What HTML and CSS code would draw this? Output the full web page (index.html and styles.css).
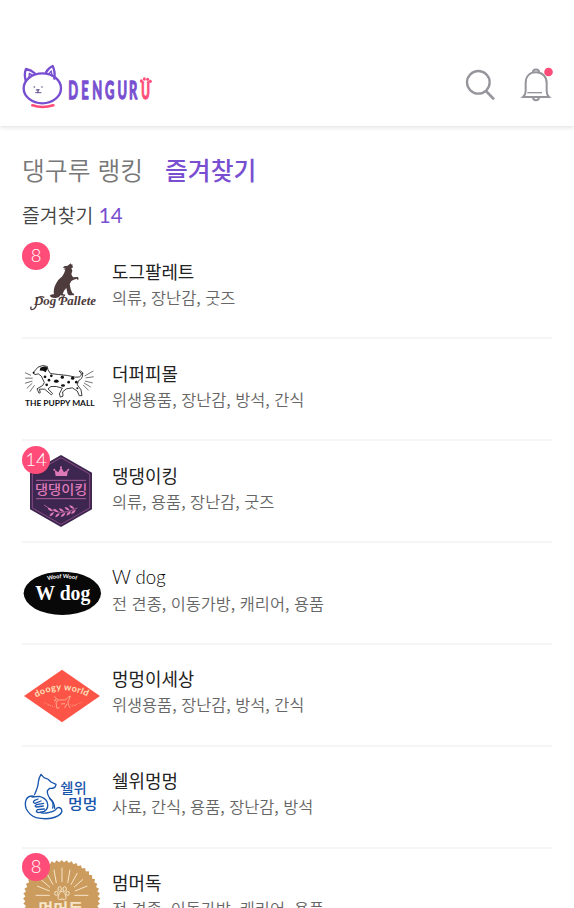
FILE: index.html
```html
<!DOCTYPE html>
<html lang="ko">
<head>
<meta charset="utf-8">
<title>DENGURU</title>
<link rel="stylesheet" href="styles.css">
</head>
<body>
<header class="header">
  <svg class="brand" viewBox="0 0 480 195" fill="none" stroke-linecap="round" stroke-linejoin="round">
    <g stroke="#784fd0" stroke-width="7">
      <ellipse cx="97" cy="100" rx="56" ry="45"/>
      <path d="M47 76C43 62 44 51 48 42C59 44 68 49 77 57M108 52C113 43 119 37 128 33C134 45 135 57 133 71"/>
      <path d="M57 67L58 55L68 61M116 57L124 48L126 63" stroke-width="4"/>
    </g>
    <path d="M80 104L88 104L84 108ZM84 108V113M77 113H93" stroke="#66518f" stroke-width="3"/>
    <circle cx="73" cy="96" r="2.5" fill="#66518f"/><circle cx="96" cy="96" r="2.5" fill="#66518f"/>
    <path d="M67 151Q98 161 130 151" stroke="#ff4c78" stroke-width="8"/>
    <g class="wordmark" transform="scale(.53 1)">
      <text fill="#784fd0" stroke="#784fd0" stroke-width="4" y="133" x="330 403 466 538 608 674">DENGUR</text>
      <text fill="#ff4c78" stroke="#ff4c78" stroke-width="4" x="743" y="133" class="u">U</text>
    </g>
    <g fill="#ff4c78"><ellipse cx="394" cy="78" rx="4.500" ry="5"/><ellipse cx="403" cy="72" rx="4.500" ry="5"/><ellipse cx="413" cy="73" rx="4.500" ry="5"/><ellipse cx="421" cy="79" rx="4.500" ry="5"/></g>
  </svg>
  <svg class="actions" viewBox="0 0 372 240" fill="none" stroke="#96959c" stroke-width="7">
    <circle cx="85" cy="82" r="34"/>
    <path d="M108 108L132 133" stroke-width="8"/>
    <g stroke-width="6">
      <path d="M219 126H297C291 120 290 115 290 108V84C290 64 277 52 258 52S227 64 227 84V108C227 115 225 120 219 126Z"/>
      <path d="M249 52C249 41 267 41 267 52M249 128C250 138 266 138 267 128"/>
      <path d="M232 113H276" stroke-width="4"/>
    </g>
    <circle cx="295.500" cy="51" r="13" fill="#ff4c78" stroke="none"/>
  </svg>
</header>
<main class="content">
  <nav class="tabs"><a class="tab">댕구루 랭킹</a><a class="tab active">즐겨찾기</a></nav>
  <p class="count">즐겨찾기 <b>14</b></p>
  <ul class="list">
    <li class="row">
      <div class="logo"><svg viewBox="0 0 80 80"><g transform="translate(-12 -12.700) scale(.33333)">
        <path fill="#4e3b3c" d="M159 97L162 93L173 91L182 84L184 88L187 85L187 91L190 96L184 98L187 106L184 117L189 126L204 125L206 131L203 135L201 130L191 133L184 137L179 146L182 162L187 173L193 176L191 180L177 180L173 176L169 158L162 166L158 176L166 178L165 182L151 180Q147 188 136 188Q124 189 119 181Q123 175 132 177Q129 163 137 147Q144 132 157 123Q163 114 166 103L160 101L168 98Z"/>
        <text class="script" x="72" y="209" textLength="186" lengthAdjust="spacingAndGlyphs">Dog Pallete</text>
        <path d="M78 191Q88 180 103 186M80 207Q76 222 65 223Q60 221 64 214M148 196Q144 187 163 184" fill="none" stroke="#4e3b3c" stroke-width="4"/>
      </g></svg><span class="badge">8</span></div>
      <div class="info"><h2>도그팔레트</h2><p>의류, 장난감, 굿즈</p></div>
    </li>
    <li class="row">
      <div class="logo"><svg viewBox="0 0 80 80"><g transform="translate(-12 .500) scale(.33333)">
        <g fill="none" stroke="#171717" stroke-width="2.500" stroke-linejoin="round" stroke-linecap="round">
          <path d="M70 69L84 53L98 48L112 51L114 61L121 72L145 75L173 78L196 83Q211 85 214 77Q216 70 207 65Q216 62 218 74Q218 88 205 94L202 106L213 121L216 138L208 139L202 125L187 115L169 118L158 127L159 140L151 143L148 133L157 116L139 111L123 111L114 118L128 132L124 136L104 119L88 119L91 129L87 131L81 118L98 108L103 99L94 80L85 73L76 75Z"/>
          <path d="M46 70L62 77M47 86L67 86M46 101L66 95M51 116L66 102M60 126L73 108M249 65L225 79M250 82L228 85M226 95L247 100M223 101L241 112M220 107L235 122" stroke-width="1.800"/>
        </g>
        <g fill="#111"><path d="M91 55Q107 46 113 56L107 68L99 64L89 63Z"/><circle cx="71" cy="70" r="3"/><ellipse cx="139" cy="95" rx="7" ry="5"/><circle cx="124" cy="79" r="4"/><circle cx="117" cy="92" r="4"/><circle cx="105" cy="82" r="4"/><circle cx="157" cy="83" r="5"/><ellipse cx="159" cy="108" rx="6" ry="4"/><circle cx="176" cy="98" r="4"/><circle cx="188" cy="86" r="5"/><circle cx="199" cy="98" r="4"/><circle cx="110" cy="106" r="4"/><circle cx="202" cy="116" r="3"/><circle cx="218" cy="71" r="2"/></g>
        <text class="puppy" x="45" y="170" textLength="209" lengthAdjust="spacingAndGlyphs">THE PUPPY MALL</text>
      </g></svg></div>
      <div class="info"><h2>더퍼피몰</h2><p>위생용품, 장난감, 방석, 간식</p></div>
    </li>
    <li class="row">
      <div class="logo"><svg viewBox="0 0 80 80"><g transform="translate(-12 -11) scale(.33333)">
        <path fill="#3d2650" d="M153 45L246 98V208L153 261L60 208V98Z"/>
        <path d="M153 53L239 102V204L153 253L67 204V102Z" fill="none" stroke="#ae5d99" stroke-width="2"/>
        <path d="M78 121H228M78 176H228" stroke="#c56ca9" stroke-width="2.500"/>
        <g fill="#df7ab8"><path d="M134 90L145 97L153 82L162 97L174 89L171 108H137Z"/><circle cx="133" cy="89" r="3"/><circle cx="153" cy="82" r="3"/><circle cx="175" cy="89" r="3"/></g>
        <text class="king" x="75" y="162" textLength="157" lengthAdjust="spacingAndGlyphs">댕댕이킹</text>
        <path d="M102 195Q150 235 202 204" fill="none" stroke="#df7ab8" stroke-width="2"/>
        <g fill="#df7ab8"><path id="leaf" d="M128 214Q114 212 113 203Q124 203 128 214M132 216Q118 220 119 229Q130 227 132 216"/><use href="#leaf" x="17" y="3"/><use href="#leaf" x="34" y="2"/><use href="#leaf" x="51" y="-2"/><use href="#leaf" x="65" y="-7"/></g>
      </g></svg><span class="badge">14</span></div>
      <div class="info"><h2>댕댕이킹</h2><p>의류, 용품, 장난감, 굿즈</p></div>
    </li>
    <li class="row">
      <div class="logo"><svg viewBox="0 0 80 80"><g transform="translate(-12 7) scale(.33333)">
        <ellipse cx="157" cy="100" rx="116" ry="65" fill="#080808"/>
        <path d="M56 87H250M49 112H265M71 137H242M80 63H236" stroke="#303030" stroke-width="1" stroke-dasharray="1 8 2 13"/>
        <path id="woof" d="M113 61Q157 48 205 61" fill="none"/>
        <text class="woof"><textPath href="#woof" textLength="88">Woof Woof</textPath></text>
        <text class="wdog" x="76" y="121" textLength="165" lengthAdjust="spacingAndGlyphs">W dog</text>
      </g></svg></div>
      <div class="info"><h2 class="latin">W dog</h2><p>전 견종, 이동가방, 캐리어, 용품</p></div>
    </li>
    <li class="row">
      <div class="logo"><svg viewBox="0 0 80 80"><g transform="translate(-12 5) scale(.33333)">
        <path fill="#fc5548" d="M156 29L270 108L156 187L42 108Z"/>
        <path id="arc" d="M79 113Q153 68 236 112" fill="none"/>
        <text class="doogy"><textPath href="#arc" textLength="160">doogy world</textPath></text>
        <path d="M133 109L139 115L143 120H167L174 112L181 108L178 118L174 124L175 136L181 144M170 132L164 144M144 121L138 129L141 145L149 143M153 132L165 131M139 115L133 122L140 123" fill="none" stroke="#ffd0ae" stroke-width="2"/>
        <path d="M101 127L128 140M186 139L214 127M113 134L135 141M181 135L199 135" fill="none" stroke="#ffb393" stroke-width="2" stroke-dasharray="3 4"/>
      </g></svg></div>
      <div class="info"><h2>멍멍이세상</h2><p>위생용품, 장난감, 방석, 간식</p></div>
    </li>
    <li class="row">
      <div class="logo"><svg viewBox="0 0 80 80"><g transform="translate(-12 8) scale(.33333)">
        <g fill="none" stroke="#1855ac" stroke-width="4" stroke-linecap="round" stroke-linejoin="round">
          <path d="M74 88C79 77 85 64 85 51Q86 39 93 28L102 38Q116 41 123 51L138 58Q137 72 119 70L112 77Q111 91 123 104Q132 113 128 129M74 94Q56 90 49 103Q43 118 49 132Q59 151 78 158Q118 167 145 152Q160 142 154 132Q148 124 140 130Q136 139 118 142Q101 147 92 142"/>
          <path d="M66 96L88 94Q105 98 111 110Q118 129 103 139L85 143Q75 141 82 134L103 132M100 123L80 126Q71 123 80 119L101 115M93 108L75 115Q66 113 74 106L84 102M134 130Q133 110 119 101"/>
        </g>
        <g transform="scale(1 1.150)">
          <text class="shell" x="151" y="73.500" textLength="79" lengthAdjust="spacingAndGlyphs">쉘위</text>
          <text class="shell" x="174" y="116" textLength="88" lengthAdjust="spacingAndGlyphs">멍멍</text>
        </g>
      </g></svg></div>
      <div class="info"><h2>쉘위멍멍</h2><p>사료, 간식, 용품, 장난감, 방석</p></div>
    </li>
    <li class="row">
      <div class="logo"><svg viewBox="0 0 80 80"><g transform="translate(-12 -14) scale(.33333)">
        <g fill="#cc9c5e"><g id="teeth"><rect id="sq" x="73" y="79" width="164" height="164"/><use href="#sq" transform="rotate(7.500 155 161)"/><use href="#sq" transform="rotate(15 155 161)"/></g><use href="#teeth" transform="rotate(22.500 155 161)"/><use href="#teeth" transform="rotate(45 155 161)"/><use href="#teeth" transform="rotate(67.500 155 161)"/></g>
        <path d="M156 68V111M132 74L139 114M180 74L173 114M110 84L129 119M202 84L183 119M92 103L120 127M219 103L192 127M81 123L119 138M232 123L195 138M77 151H119M193 151H235" stroke="#f6e5c9" stroke-width="3" fill="none"/>
        <g fill="none" stroke="#f6e5c9" stroke-width="3"><path d="M156 139C147 139 139 164 149 164Q156 159 163 164C173 164 166 139 156 139Z"/><ellipse cx="149" cy="132" rx="5" ry="7"/><ellipse cx="164" cy="132" rx="5" ry="7"/><ellipse cx="139" cy="145" rx="5" ry="6"/><ellipse cx="173" cy="145" rx="5" ry="6"/></g>
        <text class="mum" x="85" y="213" textLength="135" lengthAdjust="spacingAndGlyphs">멈머독</text>
      </g></svg><span class="badge">8</span></div>
      <div class="info"><h2>멈머독</h2><p>전 견종, 이동가방, 캐리어, 용품</p></div>
    </li>
  </ul>
</main>
</body>
</html>
```
FILE: styles.css
```css
* { box-sizing: border-box; }
html { height: 100%; overflow: hidden; }
body {
  height: 908px;
  margin: 0;
  overflow: hidden;
  background: #fff;
  font-family: "Noto Sans CJK KR", sans-serif;
  font-weight: 350;
}
h2, p, ul { margin: 0; padding: 0; }
.header {
  display: flex;
  justify-content: space-between;
  height: 126px;
  padding: 55px 0 0 10px;
  box-shadow: 0 1px 5px rgba(0, 0, 0, .14);
}
.brand { width: 160px; height: 65px; }
.actions { width: 124px; height: 80px; }
.wordmark text { font: 700 73px Lato, sans-serif; }
.wordmark .u { font-size: 66px; }
.content { padding: 23px 22px 0; }
.tabs { display: flex; gap: 22px; height: 40px; line-height: 40px; font-size: 24.8px; color: #777; }
.tab { white-space: nowrap; }
.tab.active { color: #784fd0; font-weight: 500; }
.count { height: 48.6px; padding-top: 12px; line-height: 28px; font-size: 19.4px; color: #444; }
.count b { color: #784fd0; font: 400 20.5px Lato, sans-serif; }
.list { list-style: none; }
.row {
  display: flex;
  align-items: center;
  gap: 10px;
  height: 101.85px;
  border-bottom: 2px solid #f5f5f5;
}
.logo { position: relative; width: 80px; height: 80px; flex: none; }
.logo svg { display: block; width: 80px; height: 80px; }
.badge {
  position: absolute;
  top: -5.5px;
  left: 0;
  width: 28px;
  height: 28px;
  border-radius: 50%;
  background: #ff4c78;
  color: #fff;
  font: 300 18.5px/27px Lato, sans-serif;
  text-align: center;
}
.info { padding-bottom: 7px; }
.info h2 { font-size: 17.9px; line-height: 26px; font-weight: 400; color: #222; }
.info .latin { font-family: Lato, sans-serif; font-size: 18.6px; font-weight: 300; color: #000; }
.info p { font-size: 16.35px; line-height: 26px; color: #666; white-space: nowrap; }
.script { font: italic 700 40px "Liberation Serif", serif; fill: #4e3b3c; }
.puppy { font: 700 25px Lato, sans-serif; fill: #111; }
.king { font: 500 39px "Noto Sans CJK KR", sans-serif; fill: #df7ab8; }
.woof { font: 700 17px Lato, sans-serif; fill: #fff; }
.wdog { font: 700 62px "Liberation Serif", serif; fill: #fff; }
.doogy { font: 700 27px Lato, sans-serif; fill: #ffe0bb; }
.shell { font: 500 37px "Noto Sans CJK KR", sans-serif; fill: #1855ac; }
.mum { font: 700 50px "Noto Sans CJK KR", sans-serif; fill: #f6e5c9; }
```
